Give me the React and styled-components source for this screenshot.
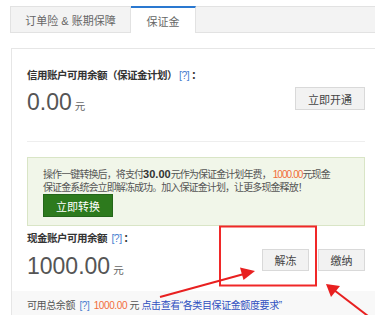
import React from 'react';
import styled, { createGlobalStyle } from 'styled-components';

const GlobalStyle = createGlobalStyle`
  html, body {
    margin: 0;
    padding: 0;
    background: #fff;
    font-family: 'Liberation Sans', 'Noto Sans CJK SC', sans-serif;
    color: #333;
  }
`;

const Page = styled.div`
  position: relative;
  width: 375px;
  height: 315px;
  overflow: hidden;
  padding: 6px 0 0 10px;
  box-sizing: border-box;
`;

const TabBar = styled.div`
  display: flex;
  height: 27px;
  margin-right: -20px;
`;

const Tab = styled.div`
  box-sizing: border-box;
  width: ${(p) => p.$width}px;
  display: flex;
  align-items: center;
  justify-content: center;
  font-size: 11px;
  color: #666;
  background: ${(p) => (p.$active ? '#fff' : '#f3f3f3')};
  border: 1px solid #e2e2e2;
  border-top: ${(p) => (p.$active ? '2px solid #2a78d0' : '1px solid #e2e2e2')};
  border-bottom: ${(p) => (p.$active ? 'none' : '1px solid #e2e2e2')};
  border-left: ${(p) => (p.$active ? 'none' : '1px solid #e2e2e2')};
`;

const TabFiller = styled.div`
  flex: 1;
  background: #f3f3f3;
  border: 1px solid #e2e2e2;
  border-left: none;
`;

const Panel = styled.div`
  margin: 15px -10px 0 1px;
  border: 1px solid #e6e6e6;
  padding: 0 19px 0 15px;
`;

const Section = styled.div`
  display: flex;
  justify-content: space-between;
  align-items: flex-start;
  padding-top: ${(p) => p.$top}px;
  padding-bottom: ${(p) => p.$bottom}px;
  border-bottom: ${(p) => (p.$divider ? '1px solid #eee' : 'none')};
`;

const Label = styled.div`
  height: 16px;
  font-size: 10.5px;
  line-height: 16px;
  font-weight: bold;
  color: #333;
  letter-spacing: -0.5px;
  white-space: nowrap;
`;

const Help = styled.span`
  font-weight: normal;
  color: #4a7fd0;
  margin: 0 2px;
`;

const Amount = styled.div`
  display: flex;
  align-items: baseline;
  height: 26px;
  margin-top: ${(p) => p.$top}px;
  font-size: 23px;
  line-height: 26px;
  color: #555;
`;

const Unit = styled.span`
  font-size: 10.5px;
  line-height: 1;
  color: #666;
  margin-left: 3px;
`;

const Actions = styled.div`
  display: flex;
  gap: 9px;
  margin-top: ${(p) => p.$top}px;
`;

const GrayButton = styled.button`
  box-sizing: border-box;
  width: ${(p) => p.$width}px;
  height: ${(p) => p.$height}px;
  padding: 0;
  background: #f2f2f2;
  border: 1px solid #d9d9d9;
  color: #444;
  font-size: 11px;
  font-family: inherit;
`;

const Notice = styled.div`
  margin-top: 15px;
  background: #f1f6e9;
  border: 1px solid #d9e5c6;
  padding: 10px 8px 8px 15px;
  font-size: 10px;
  line-height: 13px;
  color: #555;
  white-space: nowrap;
  letter-spacing: -0.9px;
`;

const NoticeLine = styled.div`
  height: 13px;
`;

const Strong = styled.b`
  color: #333;
  font-size: 11px;
  line-height: 1;
  letter-spacing: 0;
`;

const Orange = styled.span`
  color: #f26c3a;
`;

const GreenButton = styled.button`
  display: block;
  width: 70px;
  height: 23px;
  padding: 0;
  background: #2d7a1d;
  border: 1px solid #24661a;
  color: #fff;
  font-size: 11px;
  font-family: inherit;
  letter-spacing: 0;
`;

const Footer = styled.div`
  margin: 0 -19px 0 -15px;
  padding: 8px 15px 10px;
  background: #f8f8f8;
  font-size: 10px;
  line-height: 14px;
  color: #555;
  white-space: nowrap;
  letter-spacing: -0.4px;
`;

const Link = styled.span`
  color: #2f4fc0;
`;

const Overlay = styled.svg`
  position: absolute;
  left: 0;
  top: 0;
  pointer-events: none;
`;

export default function App() {
  return (
    <Page>
      <GlobalStyle />
      <TabBar>
        <Tab $width={121}>订单险 &amp; 账期保障</Tab>
        <Tab $width={65} $active>保证金</Tab>
        <TabFiller />
      </TabBar>
      <Panel>
        <Section $top={18} $bottom={26} $divider>
          <div>
            <Label>
              信用账户可用余额（保证金计划）<Help>[?]</Help>：
            </Label>
            <Amount $top={6}>
              0.00<Unit>元</Unit>
            </Amount>
          </div>
          <Actions $top={20}>
            <GrayButton $width={70} $height={23}>立即开通</GrayButton>
          </Actions>
        </Section>
        <Notice>
          <NoticeLine>
            操作一键转换后，将支付<Strong>30.00</Strong>元作为保证金计划年费， <Orange>1000.00</Orange>元现金
          </NoticeLine>
          <NoticeLine>保证金系统会立即解冻成功。加入保证金计划，让更多现金释放！</NoticeLine>
          <GreenButton>立即转换</GreenButton>
        </Notice>
        <Section $top={4} $bottom={12}>
          <div>
            <Label>
              现金账户可用余额 <Help>[?]</Help>：
            </Label>
            <Amount $top={7}>
              1000.00<Unit>元</Unit>
            </Amount>
          </div>
          <Actions $top={19}>
            <GrayButton $width={47} $height={22}>解冻</GrayButton>
            <GrayButton $width={47} $height={22}>缴纳</GrayButton>
          </Actions>
        </Section>
        <Footer>
          可用总余额 <Help>[?]</Help> <Orange>1000.00</Orange> 元{' '}
          <Link>点击查看“各类目保证金额度要求”</Link>
        </Footer>
      </Panel>
      <Overlay width="375" height="315" viewBox="0 0 375 315">
        <rect x="220" y="226.5" width="96" height="59" fill="none" stroke="#f02828" strokeWidth="2" />
        <line x1="160" y1="297" x2="244" y2="274" stroke="#e82020" strokeWidth="2" />
        <polygon points="255,271 240,267.5 243.5,280" fill="#e82020" />
        <line x1="368" y1="316" x2="334" y2="290" stroke="#e82020" strokeWidth="2" />
        <polygon points="326,284 331,297 340,286" fill="#e82020" />
      </Overlay>
    </Page>
  );
}
